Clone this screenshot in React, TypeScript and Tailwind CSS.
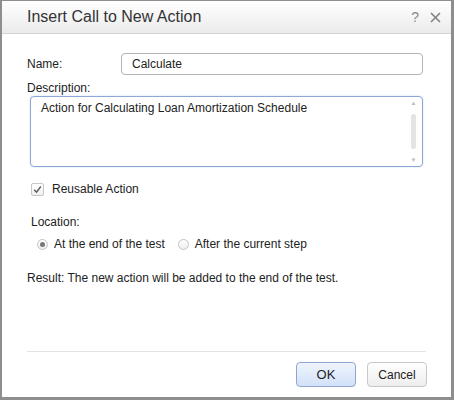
import { useState } from 'react';

export default function App() {
  const [name, setName] = useState('Calculate');
  const [desc, setDesc] = useState('Action for Calculating Loan Amortization Schedule');
  const [reusable, setReusable] = useState(true);
  const [location, setLocation] = useState<'end' | 'after'>('end');

  return (
    <div
      className="w-[454px] h-[400px] flex flex-col bg-white border-l-2 border-t border-r-[3px] border-b-[3px] border-[#8e8e8e] text-[12px] text-[#222]"
      style={{ fontFamily: '"Liberation Sans", Arial, sans-serif' }}
    >
      {/* title bar */}
      <div className="h-[33px] shrink-0 flex items-center pl-[25px] pr-[10px] bg-gradient-to-b from-white to-[#ebebeb] border-b border-[#d4d4d4]">
        <span className="text-[16px] text-[#333] flex-1">Insert Call to New Action</span>
        <button className="text-[14px] text-[#888] mr-[11px]">?</button>
        <button className="text-[#777]">
          <svg width="11" height="11" viewBox="0 0 11 11">
            <path d="M1 1 L10 10 M10 1 L1 10" stroke="#808080" strokeWidth="1.5" />
          </svg>
        </button>
      </div>

      {/* body */}
      <div className="flex-1 flex flex-col pl-[25px] pr-[28px] pt-[19px]">
        <div className="flex items-center h-[22px]">
          <label className="w-[94px]">Name:</label>
          <input
            value={name}
            onChange={(e) => setName(e.target.value)}
            className="flex-1 h-[22px] px-[10px] border border-[#b4b4b4] rounded-[4px] outline-none text-[12px] text-[#222]"
          />
        </div>

        <label className="mt-[5px] leading-[16px]">Description:</label>
        <div className="mt-0 ml-[3px] h-[71px] flex border border-[#8ea7d6] rounded-[4px] shadow-[0_0_2px_#c4d3f0]">
          <textarea
            value={desc}
            onChange={(e) => setDesc(e.target.value)}
            className="flex-1 resize-none outline-none px-[10px] pt-[4px] text-[12px] text-[#222] leading-[15px]"
            style={{ scrollbarWidth: 'none' }}
          />
          <div className="w-[13px] flex flex-col items-center py-[3px] mr-[2px]">
            <span className="text-[6px] text-[#bbb] leading-[6px]">▲</span>
            <div className="w-[5px] flex-1 my-[8px] rounded-full bg-[#e4e4e4]" />
            <span className="text-[6px] text-[#bbb] leading-[6px]">▼</span>
          </div>
        </div>

        <label className="mt-[13px] ml-[4px] flex items-center gap-[8px] cursor-pointer">
          <span
            onClick={() => setReusable(!reusable)}
            className="w-[13px] h-[13px] border border-[#c6c6c6] rounded-[2px] bg-gradient-to-b from-white to-[#f0f0f0] flex items-center justify-center"
          >
            {reusable && (
              <svg width="9" height="9" viewBox="0 0 9 9">
                <path d="M1.2 4.8 L3.5 7.2 L7.8 1.5" stroke="#555" strokeWidth="1.3" fill="none" />
              </svg>
            )}
          </span>
          <span onClick={() => setReusable(!reusable)}>Reusable Action</span>
        </label>

        <div className="mt-[16px] ml-[4px] leading-[16px]">Location:</div>

        <div className="mt-[5px] ml-[10px] flex items-center">
          <Radio checked={location === 'end'} onClick={() => setLocation('end')} label="At the end of the test" />
          <div className="w-[13px]" />
          <Radio checked={location === 'after'} onClick={() => setLocation('after')} label="After the current step" />
        </div>

        <div className="mt-[17px] leading-[16px]">Result: The new action will be added to the end of the test.</div>

        <div className="flex-1" />

        <div className="border-t border-[#e2e2e2] -mr-[3px]" />
        <div className="h-[45px] flex items-center justify-end gap-[11px] -mr-[4px]">
          <button className="w-[60px] h-[25px] rounded-[4px] border border-[#90a6cf] bg-gradient-to-b from-[#eef4fd] to-[#d2e1f8] text-[13px] text-[#222]">
            OK
          </button>
          <button className="w-[60px] h-[25px] rounded-[4px] border border-[#c8c8c8] bg-gradient-to-b from-white to-[#ededed] text-[12px] text-[#222]">
            Cancel
          </button>
        </div>
      </div>
    </div>
  );
}

function Radio({ checked, onClick, label }: { checked: boolean; onClick: () => void; label: string }) {
  return (
    <span onClick={onClick} className="flex items-center gap-[6px] cursor-pointer">
      <span className="w-[11px] h-[11px] rounded-full border border-[#c4c4c4] bg-gradient-to-b from-white to-[#eeeeee] flex items-center justify-center">
        {checked && <span className="w-[5px] h-[5px] rounded-full bg-[#777]" />}
      </span>
      <span>{label}</span>
    </span>
  );
}
